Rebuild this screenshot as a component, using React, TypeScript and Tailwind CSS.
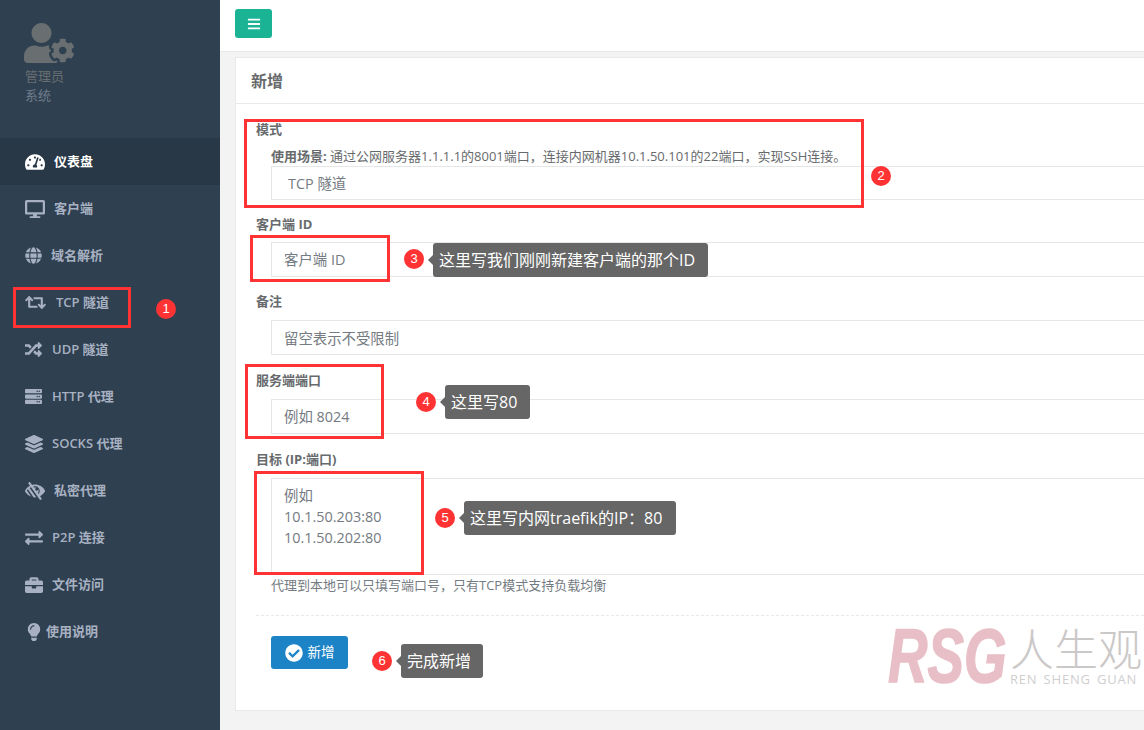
import {
  FaBars,
  FaBriefcase,
  FaCheckCircle,
  FaDesktop,
  FaExchangeAlt,
  FaGlobe,
  FaLayerGroup,
  FaLightbulb,
  FaLowVision,
  FaRandom,
  FaRetweet,
  FaServer,
  FaTachometerAlt,
  FaUserCog,
} from "react-icons/fa";

const fontStack = "font-['Open_Sans','Noto_Sans_CJK_SC',sans-serif]";

const navItems = [
  { icon: FaTachometerAlt, label: "仪表盘", slot: "w-[29px]", size: 20, active: true },
  { icon: FaDesktop, label: "客户端", slot: "w-[29px]", size: 20 },
  { icon: FaGlobe, label: "域名解析", slot: "w-[26px]", size: 17 },
  { icon: FaRetweet, label: "TCP 隧道", slot: "w-[31px]", size: 21 },
  { icon: FaRandom, label: "UDP 隧道", slot: "w-[27px]", size: 17 },
  { icon: FaServer, label: "HTTP 代理", slot: "w-[27px]", size: 17 },
  { icon: FaLayerGroup, label: "SOCKS 代理", slot: "w-[27px]", size: 18 },
  { icon: FaLowVision, label: "私密代理", slot: "w-[29px]", size: 20 },
  { icon: FaExchangeAlt, label: "P2P 连接", slot: "w-[27px]", size: 18 },
  { icon: FaBriefcase, label: "文件访问", slot: "w-[27px]", size: 18 },
  { icon: FaLightbulb, label: "使用说明", slot: "w-[21px]", size: 18 },
];

const redBoxes = [
  "left-[13px] top-[287px] w-[118px] h-[41px]",
  "left-[244px] top-[119px] w-[620px] h-[89px]",
  "left-[250px] top-[235px] w-[140px] h-[47px]",
  "left-[245px] top-[364px] w-[139px] h-[75px]",
  "left-[254px] top-[471px] w-[170px] h-[104px]",
];

const badges = [
  { n: 1, pos: "left-[156px] top-[299px]" },
  { n: 2, pos: "left-[871px] top-[166px]" },
  { n: 3, pos: "left-[404px] top-[249px]" },
  { n: 4, pos: "left-[416px] top-[392px]" },
  { n: 5, pos: "left-[435px] top-[508px]" },
  { n: 6, pos: "left-[372px] top-[651px]" },
];

const notes = [
  { text: "这里写我们刚刚新建客户端的那个ID", pos: "left-[433px] top-[243px] w-[275px]" },
  { text: "这里写80", pos: "left-[445px] top-[385px] w-[85px]" },
  { text: "这里写内网traefik的IP：80", pos: "left-[464px] top-[501px] w-[212px]" },
  { text: "完成新增", pos: "left-[401px] top-[644px] w-[82px]" },
];

const inputClass =
  "block w-full h-[35px] border border-[#e5e6e7] bg-white pl-3 text-[14.4px] text-[#676a6c] outline-none placeholder:text-[#757b82]";
const labelClass = "block h-5 leading-5 text-[13px] font-bold text-[#676a6c]";

const App = () => {
  return (
    <div className={`relative flex w-[1144px] h-[730px] overflow-hidden bg-[#f3f3f4] ${fontStack}`}>
      {/* Sidebar */}
      <aside className="w-[220px] shrink-0 bg-[#2f4050]">
        <div className="h-[138px] pl-[25px] pt-[18px]">
          <FaUserCog size={50} className="-ml-px text-[#696e71]" />
          <p className="-mt-[2px] text-[13px] leading-[20px] text-[#696e71]">管理员</p>
          <p className="text-[13px] leading-[19px] text-[#6f7d8c]">系统</p>
        </div>
        <nav>
          {navItems.map((item) => (
            <a
              key={item.label}
              href="#"
              className={`flex h-[47px] items-center pl-[25px] text-[13px] font-semibold ${
                item.active ? "bg-[#293846] text-white" : "text-[#a7b1c2]"
              }`}
            >
              <span className={`${item.slot} shrink-0`}>
                <item.icon size={item.size} />
              </span>
              <span>{item.label}</span>
            </a>
          ))}
        </nav>
      </aside>

      {/* Main */}
      <main className="min-w-0 flex-1">
        <header className="h-[52px] border-b border-[#e7eaec] bg-white pl-[15px] pt-[9px]">
          <button className="flex h-[29px] w-[37px] items-center justify-center rounded-[3px] bg-[#1ab394] text-white">
            <FaBars size={14} />
          </button>
        </header>

        <div className="pl-[15px] pt-[5px]">
          <section className="h-[654px] w-[1000px] border border-[#e7eaec] bg-white">
            <h2 className="flex h-[46px] items-center border-b border-[#e7eaec] pl-[15px] text-base font-semibold text-[#676a6c]">
              新增
            </h2>

            <form className="pl-[20px] pt-[15px] pr-[60px]">
              <label className={labelClass}>模式</label>
              <div className="ml-[15px]">
                <p className="mt-[7px] h-5 whitespace-nowrap text-[13px] leading-5 text-[#676a6c]">
                  <b>使用场景:</b> 通过公网服务器1.1.1.1的8001端口，连接内网机器10.1.50.101的22端口，实现SSH连接。
                </p>
                <select className="block h-[34px] w-full appearance-none border border-[#e5e6e7] bg-white pl-4 pt-[2px] text-[14.4px] text-[#757b82] outline-none">
                  <option>TCP 隧道</option>
                </select>
              </div>

              <label className={`${labelClass} mt-[14px]`}>客户端 ID</label>
              <div className="ml-[15px] mt-2">
                <input className={inputClass} placeholder="客户端 ID" />
              </div>

              <label className={`${labelClass} mt-[14px]`}>备注</label>
              <div className="ml-[15px] mt-[9px]">
                <input className={`${inputClass} pt-[2px]`} placeholder="留空表示不受限制" />
              </div>

              <label className={`${labelClass} mt-[15px]`}>服务端端口</label>
              <div className="ml-[15px] mt-[9px]">
                <input className={inputClass} placeholder="例如 8024" />
              </div>

              <label className={`${labelClass} mt-[15px]`}>目标 (IP:端口)</label>
              <div className="ml-[15px] mt-[9px]">
                <textarea
                  className="block h-[97px] w-full resize-none border border-[#e5e6e7] bg-white px-3 py-[6px] text-[14.4px] leading-[21px] text-[#676a6c] outline-none placeholder:text-[#757b82]"
                  placeholder={"例如\n10.1.50.203:80\n10.1.50.202:80"}
                />
                <p className="h-5 text-[13px] leading-5 text-[#757b82]">
                  代理到本地可以只填写端口号，只有TCP模式支持负载均衡
                </p>
              </div>

              <div className="mt-[20px] border-t border-dashed border-[#e7eaec]" />

              <div className="ml-[15px] mt-[20px]">
                <button
                  type="button"
                  className="flex h-[33px] w-[77px] items-center justify-center gap-[5px] rounded-[3px] bg-[#1c84c6] text-[13.5px] text-white"
                >
                  <FaCheckCircle size={18} />
                  新增
                </button>
              </div>
            </form>
          </section>
        </div>
      </main>

      {/* Watermark */}
      <div className="absolute left-[888px] top-[618px] flex w-[256px] items-start">
        <div className="w-[122px] shrink-0">
          <span className="block origin-left scale-x-[0.72] font-['Liberation_Sans',sans-serif] text-[76px] font-bold italic leading-[76px] text-[#e8bfc7] [-webkit-text-stroke:1.5px_#e8bfc7]">
            RSG
          </span>
        </div>
        <div className="pt-[8px]">
          <p className="whitespace-nowrap text-[44px] font-light leading-[46px] text-[#cbc8c8]">人生观</p>
          <p className="whitespace-nowrap text-[13px] leading-[14px] tracking-[0.8px] text-[#d0cece] [word-spacing:2px]">
            REN SHENG GUAN
          </p>
        </div>
      </div>

      {/* Annotations */}
      {redBoxes.map((pos) => (
        <div key={pos} className={`absolute border-[3px] border-[#ff3333] ${pos}`} />
      ))}
      {badges.map((b) => (
        <span
          key={b.n}
          className={`absolute flex h-5 w-5 items-center justify-center rounded-full bg-[#ff3333] font-['Liberation_Sans',sans-serif] text-[13px] text-white ${b.pos}`}
        >
          {b.n}
        </span>
      ))}
      {notes.map((note) => (
        <div
          key={note.text}
          className={`absolute flex h-[34px] items-center whitespace-nowrap rounded-[3px] bg-[#666666] pl-[6px] text-base text-white ${note.pos}`}
        >
          <span className="absolute -left-[5px] top-[12px] h-0 w-0 border-y-[5px] border-r-[5px] border-y-transparent border-r-[#666666]" />
          {note.text}
        </div>
      ))}
    </div>
  );
};

export default App;
